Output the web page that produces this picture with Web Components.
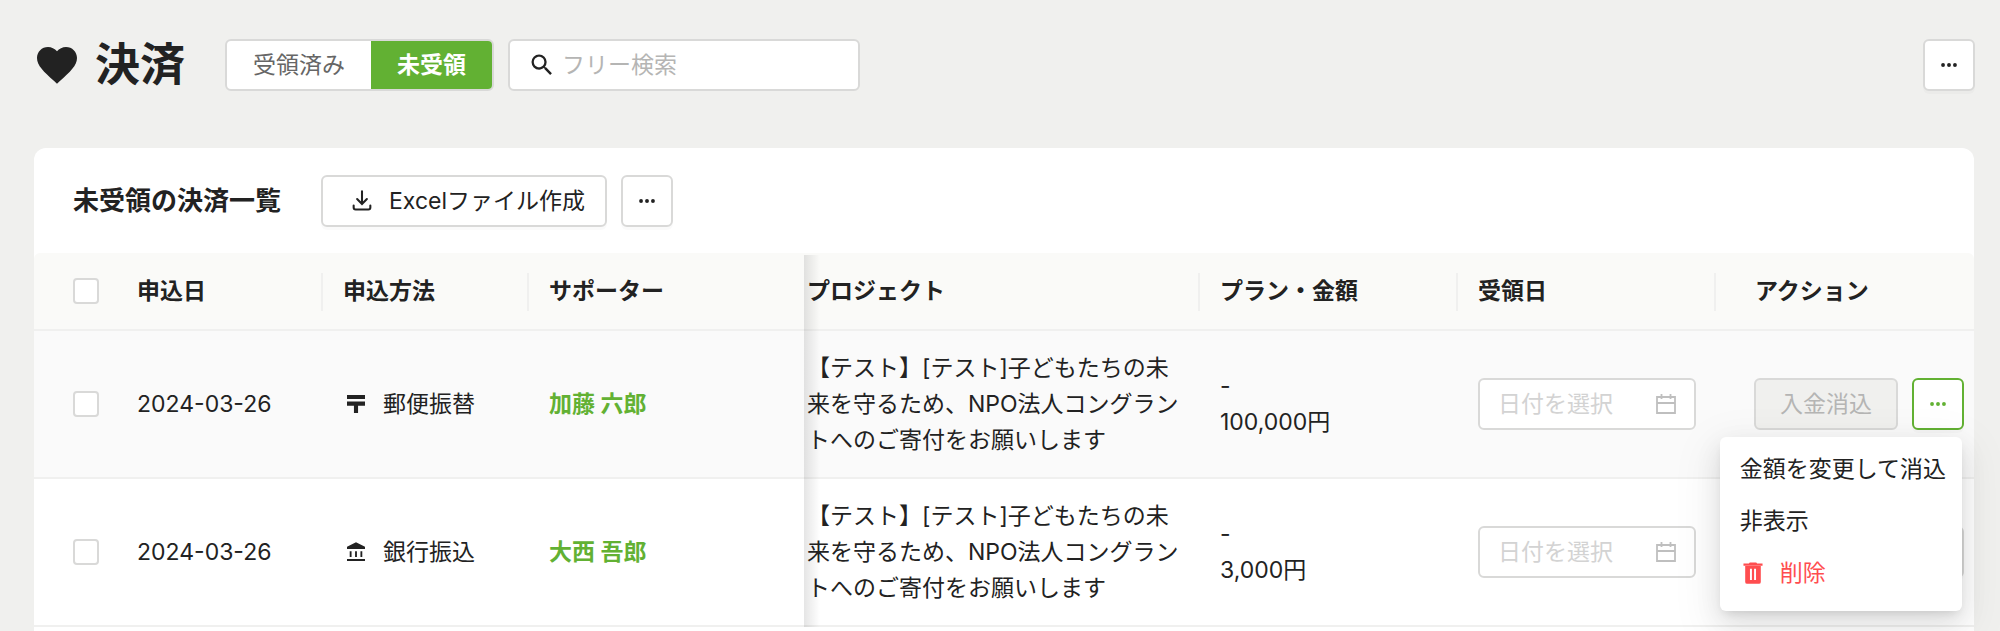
<!DOCTYPE html>
<html lang="ja">
<head>
<meta charset="utf-8">
<meta name="viewport" content="width=device-width, initial-scale=1">
<title>決済</title>
<style>
  html { background: #f0f0ee; }
  body {
    margin: 0; color: #222;
    font: 23px/36px Inter, "Noto Sans CJK JP", sans-serif;
  }
</style>
</head>
<body>
<payments-page></payments-page>
<script>
const ICONS = {
  heart: '<path d="M12 21.35l-1.45-1.32C5.4 15.36 2 12.28 2 8.5 2 5.42 4.42 3 7.5 3c1.74 0 3.41.81 4.5 2.09C13.09 3.81 14.76 3 16.5 3 19.58 3 22 5.42 22 8.5c0 3.78-3.4 6.86-8.55 11.54L12 21.35z"/>',
  search: '<path d="M15.5 14h-.79l-.28-.27A6.471 6.471 0 0 0 16 9.5 6.5 6.5 0 1 0 9.5 16c1.61 0 3.09-.59 4.23-1.57l.27.28v.79l5 4.99L20.49 19l-4.99-5zm-6 0C7.01 14 5 11.99 5 9.5S7.01 5 9.5 5 14 7.01 14 9.5 11.99 14 9.5 14z"/>',
  more: '<circle cx="5.5" cy="12" r="2.1"/><circle cx="12" cy="12" r="2.1"/><circle cx="18.5" cy="12" r="2.1"/>',
  download: '<path d="M12 3v11.5M7.5 10.2l4.500 4.500 4.500-4.500M4.300 16.200V18q0 1.800 1.800 1.800h11.800q1.800 0 1.800-1.800v-1.800" fill="none" stroke="currentColor" stroke-width="1.9" stroke-linecap="round"/>',
  post: '<path d="M3.700 3.700h16.600v3.700H3.700zM3.700 9.800h16.600v3.700h-6.400v6.800h-3.800v-6.800H3.700z"/>',
  bank: '<path d="M12 3 3.700 7.200v2h16.600v-2zM6.200 11.200h1.700v5.500H6.200zM11.150 11.200h1.700v5.500h-1.700zM16.100 11.200h1.700v5.500h-1.700zM3.700 18.500h16.600v1.700H3.700z"/>',
  calendar: '<path d="M3 5h18v16H3zM3 11h18M7.500 2v5M16.500 2v5" fill="none" stroke="currentColor" stroke-width="1.8"/>',
  trash: '<path fill-rule="evenodd" d="M3.200 3.200h5l.8-1h6l.8 1h5v2H3.200zM4.800 5h14.400v15.200a1.800 1.800 0 0 1-1.800 1.800H6.600a1.800 1.800 0 0 1-1.800-1.800zM9.200 8v10.500h1.800V8zM13 8v10.500h1.800V8z"/>'
};

function define(name, template) {
  customElements.define(name, class extends HTMLElement {
    constructor() {
      super();
      this.attachShadow({ mode: 'open' });
    }
    connectedCallback() {
      if (!this.shadowRoot.childNodes.length) {
        this.shadowRoot.innerHTML = '<style>*{box-sizing:border-box}</style>' + template(this);
      }
    }
  });
}

define('app-icon', el => `
  <style>
    :host { display: inline-flex; flex: none; width: var(--icon-size, 26px); height: var(--icon-size, 26px); }
    svg { width: 100%; height: 100%; }
  </style>
  <svg viewBox="0 0 24 24" fill="currentColor" aria-hidden="true">${ICONS[el.getAttribute('name')]}</svg>`);

define('app-button', el => `
  <style>
    :host { display: inline-flex; flex: none; }
    button {
      height: 52px; padding: 0 20px 0 26px; display: flex; align-items: center; gap: 14px;
      font: inherit; color: #222; background: #fff; white-space: nowrap;
      border: 2px solid #d9d9d8; border-radius: 6px; box-shadow: 0 3px 0 rgba(0,0,0,.02);
    }
    :host([square]) button { width: 52px; padding: 0; justify-content: center; --icon-size: 22px; }
    :host([active]) button { color: #62b133; border-color: #62b133; }
    button:disabled { color: #b5b5b4; background: #f0f0ee; box-shadow: none; padding: 0 24px; }
  </style>
  <button type="button" ${el.hasAttribute('disabled') ? 'disabled' : ''}
    ${el.hasAttribute('label') ? `aria-label="${el.getAttribute('label')}"` : ''}><slot></slot></button>`);

define('segment-switch', () => `
  <style>
    :host { display: flex; flex: none; }
    div { display: flex; height: 52px; border: 2px solid #d9d9d8; border-radius: 6px; background: #fff; overflow: hidden; }
    button { border: 0; background: none; padding: 0 26px; font: inherit; color: #666; white-space: nowrap; }
    button[aria-pressed=true] { background: #62b133; color: #fff; font-weight: 700; }
  </style>
  <div role="group" aria-label="受領状況">
    <button type="button" aria-pressed="false">受領済み</button>
    <button type="button" aria-pressed="true">未受領</button>
  </div>`);

define('search-box', () => `
  <style>
    :host { display: flex; width: 352px; }
    label {
      display: flex; flex: 1; min-width: 0; align-items: center; gap: 6px; height: 52px; padding: 0 18px;
      border: 2px solid #d9d9d8; border-radius: 6px; background: #fff;
    }
    app-icon { --icon-size: 28px; }
    input { flex: 1; min-width: 0; border: 0; outline: 0; padding: 0; font: inherit; background: none; color: #222; }
    input::placeholder { color: #b5b5b4; opacity: 1; }
  </style>
  <label><app-icon name="search"></app-icon><input type="text" placeholder="フリー検索" aria-label="フリー検索"></label>`);

define('date-field', () => `
  <style>
    :host { display: block; }
    label {
      display: flex; align-items: center; gap: 8px; height: 52px; padding: 0 16px 0 18px;
      border: 2px solid #d9d9d8; border-radius: 6px; background: #fff; color: #bfbfbf;
    }
    app-icon { --icon-size: 24px; }
    input { flex: 1; min-width: 0; border: 0; outline: 0; padding: 0; font: inherit; background: none; color: #222; }
    input::placeholder { color: #d3d3d3; opacity: 1; }
  </style>
  <label><input type="text" placeholder="日付を選択" aria-label="日付を選択"><app-icon name="calendar"></app-icon></label>`);

define('check-box', el => `
  <style>
    :host { display: flex; }
    input { appearance: none; margin: 0; width: 26px; height: 26px; border: 2px solid #d9d9d8; border-radius: 4px; background: #fff; }
  </style>
  <input type="checkbox" aria-label="${el.getAttribute('label')}">`);

define('action-menu', () => `
  <style>
    :host { display: block; }
    ul {
      list-style: none; margin: 0; padding: 6px 0 12px; background: #fff; border-radius: 6px;
      box-shadow: 0 10px 26px rgba(0,0,0,.10), 0 5px 10px -4px rgba(0,0,0,.12), 0 14px 44px 12px rgba(0,0,0,.05);
    }
    button {
      display: flex; align-items: center; gap: 14px; width: 100%; height: 52px; padding: 0 16px 0 20px;
      border: 0; background: none; font: inherit; color: #222; white-space: nowrap;
    }
    .danger { color: #ff4d4f; }
  </style>
  <ul role="menu">
    <li role="none"><button type="button" role="menuitem">金額を変更して消込</button></li>
    <li role="none"><button type="button" role="menuitem">非表示</button></li>
    <li role="none"><button type="button" role="menuitem" class="danger"><app-icon name="trash"></app-icon>削除</button></li>
  </ul>`);

const ROWS = [
  { date: '2024-03-26', icon: 'post', method: '郵便振替', name: '加藤 六郎', amount: '100,000円', open: true },
  { date: '2024-03-26', icon: 'bank', method: '銀行振込', name: '大西 吾郎', amount: '3,000円' }
];
const PROJECT = '【テスト】[テスト]子どもたちの未来を守るため、NPO法人コングラントへのご寄付をお願いします';

define('payments-table', () => `
  <style>
    :host { display: block; }
    table { width: 100%; table-layout: fixed; border-collapse: separate; border-spacing: 0; }
    th, td { text-align: left; padding: 0 20px; border-bottom: 2px solid #f0f0ef; position: relative; }
    th { height: 78px; background: #fafaf8; font-weight: 700; white-space: nowrap; }
    th:first-child { border-top-left-radius: 6px; }
    th:last-child { border-top-right-radius: 6px; }
    td { height: 148px; }
    tr.open td { background: #fafafa; }
    .rule::after { content: ""; position: absolute; right: 0; top: 20px; bottom: 18px; width: 2px; background: #f0f0ef; }
    .check { padding: 0 0 0 39px; }
    .project { padding: 0 16px 0 3px; }
    .edge::before {
      content: ""; position: absolute; left: 0; top: 0; bottom: -2px; width: 16px;
      background: linear-gradient(to right, rgba(0,0,0,.1), rgba(0,0,0,0));
    }
    th.edge::before { top: 2px; }
    .method { display: flex; align-items: center; gap: 14px; white-space: nowrap; }
    a { color: #62b133; font-weight: 700; text-decoration: none; white-space: nowrap; }
    .action { padding: 0 10px 0 39px; }
    .buttons { display: flex; justify-content: flex-end; gap: 14px; position: relative; }
    action-menu { position: absolute; right: 2px; top: calc(100% + 7px); z-index: 2; }
    .date, .amount { white-space: nowrap; }
  </style>
  <table>
    <colgroup><col style="width:83px"><col style="width:206px"><col style="width:206px"><col style="width:275px"><col><col style="width:258px"><col style="width:258px"><col style="width:258px"></colgroup>
    <thead><tr>
      <th class="check"><check-box label="すべて選択"></check-box></th>
      <th class="rule">申込日</th><th class="rule">申込方法</th><th>サポーター</th>
      <th class="project edge rule">プロジェクト</th><th class="rule">プラン・金額</th><th class="rule">受領日</th><th class="action">アクション</th>
    </tr></thead>
    <tbody>${ROWS.map(r => `
      <tr class="${r.open ? 'open' : ''}">
        <td class="check"><check-box label="${r.name}を選択"></check-box></td>
        <td class="date">${r.date}</td>
        <td><div class="method"><app-icon name="${r.icon}"></app-icon>${r.method}</div></td>
        <td><a href="#">${r.name}</a></td>
        <td class="project edge">${PROJECT}</td>
        <td class="amount">-<br>${r.amount}</td>
        <td><date-field></date-field></td>
        <td class="action"><div class="buttons">
          ${r.open ? '<app-button disabled>入金消込</app-button>' : ''}
          <app-button square ${r.open ? 'active' : ''} label="その他の操作"><app-icon name="more"></app-icon></app-button>
          ${r.open ? '<action-menu></action-menu>' : ''}
        </div></td>
      </tr>`).join('')}
    </tbody>
  </table>`);

define('page-header', () => `
  <style>
    :host { display: flex; align-items: center; gap: 14px; padding: 39px 25px 57px 33px; }
    h1 { display: flex; align-items: center; gap: 14px; margin: 0 26px 0 0; font-size: 45px; line-height: 52px; font-weight: 700; white-space: nowrap; --icon-size: 48px; }
    .end { margin-left: auto; }
  </style>
  <h1><app-icon name="heart"></app-icon>決済</h1>
  <segment-switch></segment-switch>
  <search-box></search-box>
  <app-button class="end" square label="メニュー"><app-icon name="more"></app-icon></app-button>`);

define('payments-card', () => `
  <style>
    :host { display: block; margin: 0 26px 0 34px; background: #fff; border-radius: 12px 12px 0 0; }
    header { display: flex; align-items: center; gap: 14px; height: 105px; padding: 0 39px; }
    h2 { margin: 0 26px 0 0; font-size: 26px; font-weight: 700; white-space: nowrap; }
  </style>
  <header>
    <h2>未受領の決済一覧</h2>
    <app-button><app-icon name="download"></app-icon>Excelファイル作成</app-button>
    <app-button square label="メニュー"><app-icon name="more"></app-icon></app-button>
  </header>
  <slot></slot>`);

define('payments-page', () => `
  <style>
    :host { display: flex; flex-direction: column; min-height: 100vh; }
    main { flex: 1; display: flex; }
    payments-card { flex: 1; min-width: 0; }
  </style>
  <page-header></page-header>
  <main><payments-card><payments-table></payments-table></payments-card></main>`);
</script>
</body>
</html>
